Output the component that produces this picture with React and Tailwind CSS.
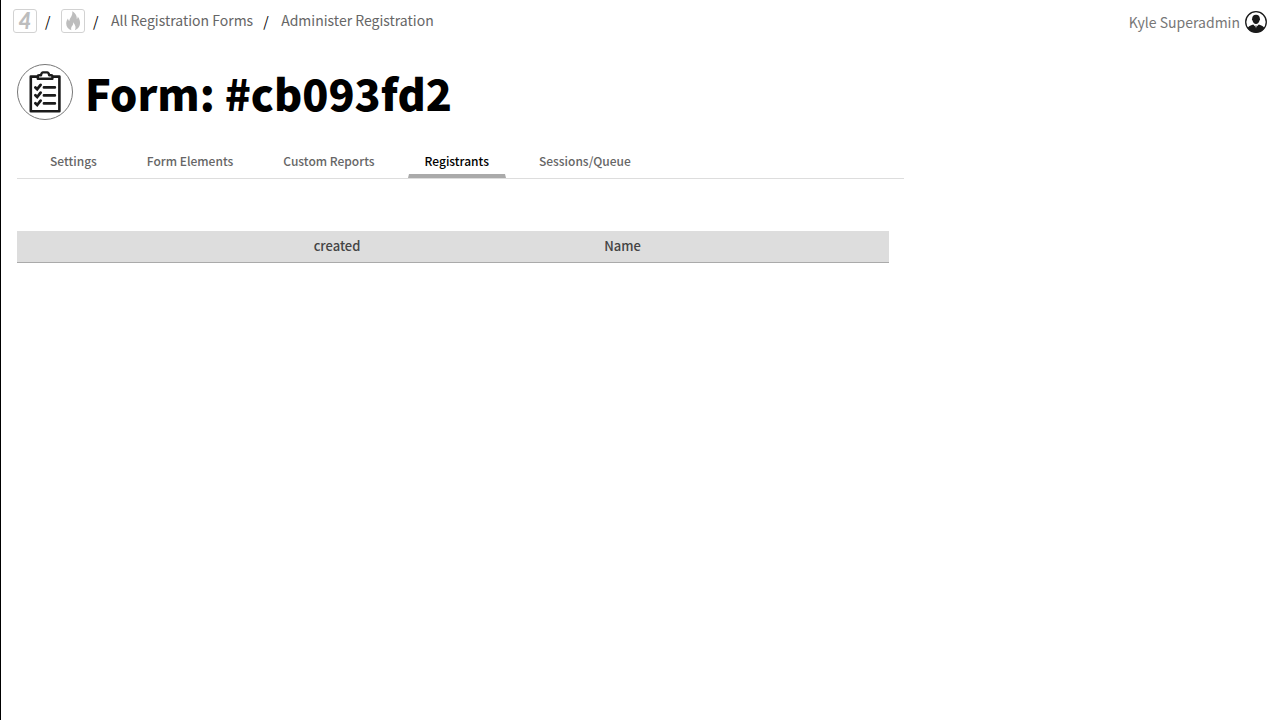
const crumbs = [
  { label: "All Registration Forms", href: "#forms" },
  { label: "Administer Registration", href: "#administer" },
];

const tabs = [
  { label: "Settings", href: "#settings" },
  { label: "Form Elements", href: "#elements" },
  { label: "Custom Reports", href: "#reports" },
  { label: "Registrants", href: "#registrants" },
  { label: "Sessions/Queue", href: "#sessions" },
];

const columns = ["", "created", "Name"];

const FourIcon = () => (
  <span className="flex size-6 items-center justify-center rounded-[3px] border border-[#d2d2d2] font-['Lato',sans-serif] text-[22px] leading-6 font-black italic text-[#bdbdbd]">
    4
  </span>
);

const FlameIcon = () => (
  <svg viewBox="0 0 24 24" className="size-6">
    <rect x="0.5" y="0.5" width="23" height="23" rx="2.5" fill="#fff" stroke="#d2d2d2" />
    <path
      d="M11.2 2.2C15 4.2 16 7.4 15.8 10.2C16.5 9.6 16.8 8.7 16.7 7.6C18.8 10.3 19.6 13.2 18.8 16C18.1 18.6 16.3 20.2 13.9 21.2C15.2 18.6 14.6 16.2 12.2 13.2C12.3 15.4 11.8 16.1 11 17C10.2 18.1 9.8 19.6 10.4 21.3C7.2 20.2 5.2 17.8 5.2 14.6C5.2 12.4 6 10.8 7 9.4C7.2 10.6 7.5 11.4 8.3 12C8.5 8.8 12.2 6.8 11.2 2.2Z"
      fill="#bdbdbd"
    />
  </svg>
);

const UserIcon = () => (
  <svg viewBox="-1 -1 24 24" className="size-6">
    <circle cx="11" cy="11" r="10.3" fill="#fff" stroke="#1a1a1a" strokeWidth="1.3" />
    <path
      d="M2.6 17.2C3.2 15.2 5.4 14.8 8.2 13.5L11 16.2L13.8 13.5C16.6 14.8 18.8 15.2 19.4 17.2C17.4 20 14.2 21.4 11 21.4S4.6 20 2.6 17.2Z"
      fill="#1a1a1a"
    />
    <path
      d="M11 3.8C13.4 3.8 14.9 5.2 14.8 7.6C15.3 8 15.1 9.2 14.5 9.6C14.1 11.4 12.8 13.1 11 13.1S7.9 11.4 7.5 9.6C6.9 9.2 6.7 8 7.2 7.6C7.1 5.2 8.6 3.8 11 3.8Z"
      fill="#1a1a1a"
    />
    <path d="M10.3 14.6H11.7L11.4 15.6L11.8 16.6L11 17.4L10.2 16.6L10.6 15.6Z" fill="#555" />
  </svg>
);

const ClipboardIcon = () => (
  <svg viewBox="0 0 56 56" className="size-14 shrink-0" fill="none" stroke="#1a1a1a">
    <circle cx="28" cy="28" r="27.5" stroke="#777" />
    <path d="M21 12.6H13.8V47.2H42.4V12.6H35.2" strokeWidth="2.6" strokeLinejoin="round" />
    <path
      d="M20.8 14.8V12.4Q20.8 11.2 22 11.2H24Q24.6 8.4 26 8.4H30.2Q31.6 8.4 32.2 11.2H34.2Q35.4 11.2 35.4 12.4V14.8Z"
      strokeWidth="2.4"
      strokeLinejoin="round"
    />
    <path
      d="M27 23.4H37.8M27 31.4H37.8M27 39.4H37.8"
      strokeWidth="2.8"
      strokeLinecap="round"
    />
    <path
      d="M18.4 23.4L20.2 25.2L23.6 20.9M18.4 31.2L20.2 33L23.6 28.7M18.4 39.2L20.2 41L23.6 36.7"
      strokeWidth="2.8"
      strokeLinecap="round"
    />
  </svg>
);

const Slash = () => <span className="w-2">/</span>;

const TopBar = () => (
  <header className="flex items-center justify-between px-3 h-[42px]">
    <nav aria-label="Breadcrumb" className="flex items-center gap-2">
      <a href="#home" aria-label="Home">
        <FourIcon />
      </a>
      <Slash />
      <a href="#dashboard" aria-label="Dashboard">
        <FlameIcon />
      </a>
      {crumbs.map((crumb) => (
        <span key={crumb.label} className="flex items-center gap-2">
          <Slash />
          <a href={crumb.href} className="px-0.5 pb-0.5 text-[#666]">
            {crumb.label}
          </a>
        </span>
      ))}
    </nav>
    <a href="#account" className="flex items-center gap-1 pt-0.5 text-[#777]">
      Kyle Superadmin
      <UserIcon />
    </a>
  </header>
);

const Tabs = ({ active }) => (
  <nav aria-label="Form sections" className="flex gap-4 px-4 border-b border-[#ddd]">
    {tabs.map((tab) => (
      <a
        key={tab.label}
        href={tab.href}
        className={
          tab.label === active
            ? "px-4 pt-1 pb-[3px] text-xs leading-5 font-medium text-black border-x border-x-transparent border-b-4 border-b-[#aaa]"
            : "px-4 pt-1 pb-[3px] text-xs leading-5 font-medium text-[#666] border-x border-x-transparent border-b-4 border-b-transparent"
        }
      >
        {tab.label}
      </a>
    ))}
  </nav>
);

const RegistrantsTable = () => (
  <table className="w-full table-fixed border-collapse">
    <thead>
      <tr className="bg-[#ddd] border-b border-[#aaa]">
        {columns.map((column, index) => (
          <th
            key={index}
            className="h-[31px] px-1.5 text-left text-[13px] leading-5 font-medium text-[#444]"
          >
            {column}
          </th>
        ))}
      </tr>
    </thead>
    <tbody></tbody>
  </table>
);

export default function App() {
  return (
    <div className="min-h-screen border-l border-black bg-white text-black text-sm leading-5 font-['Noto_Sans_CJK_SC','Open_Sans',sans-serif]">
      <TopBar />
      <main className="pr-3">
        <div className="ml-4 mt-[22px] flex items-center gap-3">
          <ClipboardIcon />
          <h1 className="text-[43px] leading-[56px] font-black">Form: #cb093fd2</h1>
        </div>
        <section className="ml-4 mt-[27px] w-[70%]">
          <Tabs active="Registrants" />
          <div className="mt-[52px] pr-[15px]">
            <RegistrantsTable />
          </div>
        </section>
      </main>
    </div>
  );
}
